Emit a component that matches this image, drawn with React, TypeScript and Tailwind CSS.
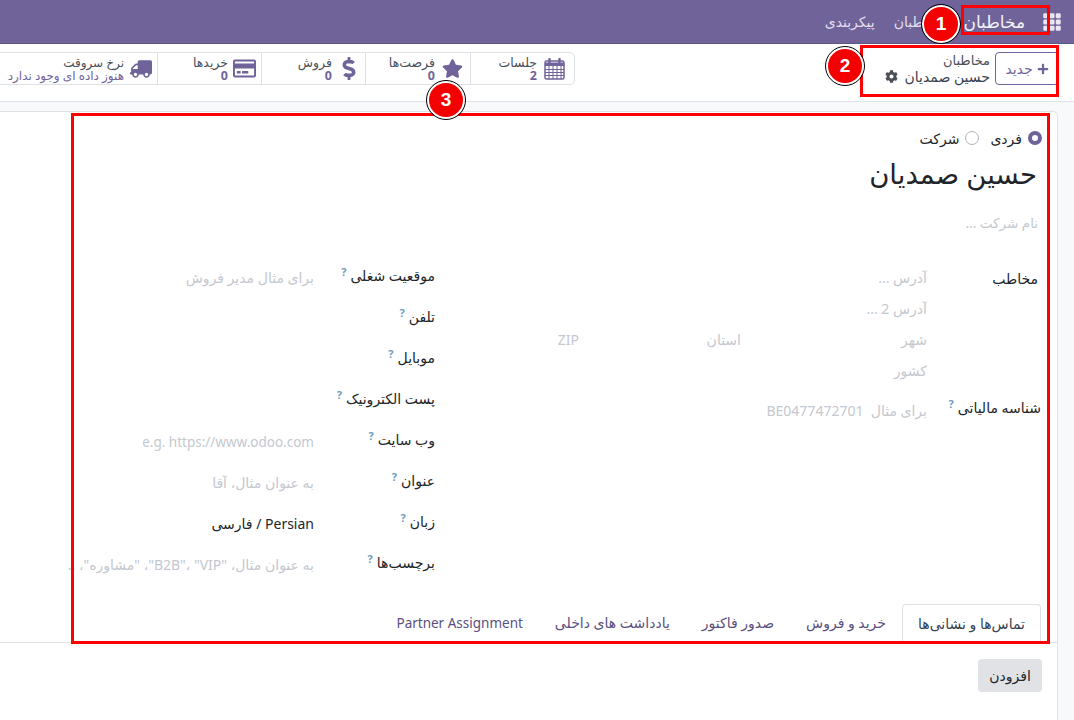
import React from 'react';
import { FaStar, FaDollarSign, FaRegCreditCard, FaTruck, FaPlus, FaCog } from 'react-icons/fa';
import { BsGrid3X3GapFill } from 'react-icons/bs';

const font = 'font-["Noto_Sans","DejaVu_Sans",sans-serif]';

const CalendarIcon = () => (
  <svg viewBox="0 0 21 22" className="w-[21px] h-[22px]" fill="none" stroke="currentColor">
    <rect x="1" y="3" width="19" height="18" rx="1.5" strokeWidth="1.5" />
    <path d="M1 4.5h19v3.5H1z" fill="currentColor" stroke="none" />
    <path d="M1 11.5h19M1 14.5h19M1 17.5h19M5 8v13M9 8v13M13 8v13M17 8v13" strokeWidth="1" />
    <path d="M5.5 1v4M15.5 1v4" strokeWidth="2.4" strokeLinecap="round" />
  </svg>
);

const stats = [
  { icon: <CalendarIcon />, label: 'جلسات', value: '2', w: 'w-[104px]', pr: 'pr-[9px] gap-[7px]' },
  { icon: <FaStar className="w-[21px] h-[21px]" />, label: 'فرصت‌ها', value: '0', w: 'w-[105px]', pr: 'pr-[7px] gap-[7px]' },
  { icon: <FaDollarSign className="w-[14px] h-[23px]" />, label: 'فروش', value: '0', w: 'w-[104px]', pr: 'pr-[9px] gap-[10px]' },
  { icon: <FaRegCreditCard className="w-[23px] h-[23px]" />, label: 'خریدها', value: '0', w: 'w-[104px]', pr: 'pr-[5px] gap-[5px]' },
];

const leftFields = [
  { label: 'موقعیت شغلی', placeholder: 'برای مثال مدیر فروش' },
  { label: 'تلفن', placeholder: '' },
  { label: 'موبایل', placeholder: '' },
  { label: 'پست الکترونیک', placeholder: '' },
  { label: 'وب سایت', placeholder: 'e.g. https://www.odoo.com', small: true },
  { label: 'عنوان', placeholder: 'به عنوان مثال، آقا' },
  { label: 'زبان', value: 'Persian / فارسی' },
  { label: 'برچسب‌ها', placeholder: 'به عنوان مثال، "B2B"، "VIP"، "مشاوره"، ...' },
];

const tabs = ['خرید و فروش', 'صدور فاکتور', 'یادداشت های داخلی', 'Partner Assignment'];

const Hint = () => <sup className="text-[11px] font-bold text-[#6f9dc0] mr-1 -top-[5px]">?</sup>;

// numbered red markers drawn on top of the screenshot
const Marker = ({ n, className }: { n: number; className: string }) => (
  <div className={`absolute w-[38px] h-[38px] rounded-full bg-[#f50000] border-2 border-white outline outline-1 outline-black flex items-center justify-center text-white text-[19px] font-bold font-["Liberation_Sans",sans-serif] ${className}`}>
    {n}
  </div>
);

export default function App() {
  return (
    <div dir="rtl" className={`relative w-[1074px] h-[720px] overflow-hidden bg-[#f8f9fa] text-[14px] text-[#212529] ${font}`}>
      {/* navbar */}
      <div className="h-[43px] bg-[#6f6399] flex items-center text-white pr-[12px] border-b border-[#5f5585] box-content">
        <BsGrid3X3GapFill className="w-[20px] h-[20px] text-[#e9e6f2]" />
        <span className="text-[17px] mr-[17px] text-[#f4f3f8]">مخاطبان</span>
        <span className="text-[14px] mr-[19px] text-[#e2deee]">مخاطبان</span>
        <span className="text-[14px] mr-[19px] text-[#e2deee]">پیکربندی</span>
      </div>

      {/* control panel */}
      <div className="h-[58px] bg-white border-b border-[#dee2e6] flex items-start pt-[8px] pr-[15px]">
        <button className="w-[64px] h-[33px] shrink-0 border border-[#6f6399] rounded-[4px] flex items-center justify-center gap-1 text-[#6f6399] text-[14px] bg-white">
          <FaPlus className="w-[12px] h-[12px]" />
          جدید
        </button>
        <div className="mr-[5px] w-[110px] leading-[15px] pt-[1px] shrink-0">
          <div className="text-[#4a4f57] text-[13px]">مخاطبان</div>
          <div className="flex items-center gap-[7px] text-[#374151] mt-[1px] text-[14px]">
            حسین صمدیان
            <FaCog className="w-[13px] h-[13px] text-[#4a4f57]" />
          </div>
        </div>
        <div className="mr-[305px] flex h-[33px] border border-[#dee2e6] rounded-r-[5px] bg-white shrink-0">
          {stats.map((s) => (
            <div key={s.label} className={`${s.w} ${s.pr} h-full border-l border-[#dee2e6] flex items-center shrink-0`}>
              <span className="text-[#6f6399] flex justify-center shrink-0">{s.icon}</span>
              <div className="leading-[13px] text-[12.5px] text-[#4a4f57]">
                <div className="whitespace-nowrap">{s.label}</div>
                <div className="font-bold text-[#6f6399]">{s.value}</div>
              </div>
            </div>
          ))}
          <div className="w-[170px] h-full flex items-center pr-[5px] gap-[6px] shrink-0">
            <FaTruck className="w-[22px] h-[22px] text-[#6f6399] -scale-x-100 shrink-0" />
            <div className="leading-[13px] text-[12px] whitespace-nowrap">
              <div className="text-[#4a4f57]">نرخ سروقت</div>
              <div className="text-[#6f6399]">هنوز داده ای وجود ندارد</div>
            </div>
          </div>
        </div>
      </div>

      {/* form sheet */}
      <div className="mt-[9px] mr-[16px] h-[620px] bg-white border border-[#dee2e6] rounded-tr-[5px] -ml-[20px]">
        <div className="pr-[16px] pt-[16px]">
          <div className="flex items-center text-[14px] h-[20px] -mr-px">
            <span className="w-[14px] h-[14px] rounded-full border-[4px] border-[#6f6399] bg-white" />
            <span className="mr-[6px]">فردی</span>
            <span className="mr-[11px] w-[14px] h-[14px] rounded-full border border-[#adb5bd]" />
            <span className="mr-[6px]">شرکت</span>
          </div>
          <div className="text-[27.5px] leading-[36px] mt-[8px] pr-[4px]">حسین صمدیان</div>
          <div className="text-[13.5px] text-[#c4c8cf] mt-[19px] pr-[3px] leading-[24px]">نام شرکت ...</div>

          <div className="flex mt-[31px]">
            {/* address group */}
            <div className="w-[606px] shrink-0 -mt-[4px]">
              <div className="flex">
                <div className="w-[114px] shrink-0 pt-[7px] pr-[3px] leading-[20px]">مخاطب</div>
                <div className="text-[14px] text-[#c4c8cf] leading-[31px]">
                  <div>آدرس ...</div>
                  <div>آدرس 2 ...</div>
                  <div className="flex">
                    <span className="w-[186px]">شهر</span>
                    <span className="w-[162px]">استان</span>
                    <span>ZIP</span>
                  </div>
                  <div>کشور</div>
                </div>
              </div>
              <div className="flex mt-[9px]">
                <div className="w-[114px] shrink-0 leading-[20px] pt-[3px]">شناسه مالیاتی<Hint /></div>
                <div className="text-[14px] text-[#c4c8cf] leading-[31px]">برای مثال&nbsp;&nbsp;BE0477472701</div>
              </div>
            </div>
            {/* contact group */}
            <div className="-mt-[2px]">
              {leftFields.map((f) => (
                <div key={f.label} className="flex h-[41px] items-start">
                  <div className="w-[121px] shrink-0 whitespace-nowrap leading-[22px] pt-[1px]">{f.label}<Hint /></div>
                  <div className={`whitespace-nowrap leading-[22px] pt-[3px] w-[247px] overflow-hidden ${f.small ? 'text-[13.5px]' : 'text-[14px]'} ${f.value ? 'text-[#212529]' : 'text-[#c4c8cf]'}`}>
                    {f.value ?? f.placeholder}
                  </div>
                </div>
              ))}
            </div>
          </div>
        </div>

        {/* tabs */}
        <div className="mt-[12px] h-[39px] border-b border-[#dee2e6] flex pr-[16px]">
          <div className="w-[139px] h-[39px] bg-white border border-b-white border-[#dee2e6] rounded-t-[4px] flex items-center justify-center text-[14px] text-[#374151]">
            تماس‌ها و نشانی‌ها
          </div>
          {tabs.map((t) => (
            <div key={t} className={`px-[16px] h-[38px] flex items-center whitespace-nowrap text-[#5a4f7f] ${t === 'Partner Assignment' ? 'text-[13.5px]' : 'text-[14px] pb-[1px]'}`}>{t}</div>
          ))}
        </div>
        <div className="pr-[15px] pt-[16px]">
          <button className="w-[64px] h-[33px] bg-[#e0e2e6] rounded-[4px] text-[14px] text-[#212529]">افزودن</button>
        </div>
      </div>

      {/* red annotations */}
      <div className="absolute left-[961px] top-[5px] w-[89px] h-[30px] border-[3px] border-[#ff0000]" />
      <div className="absolute left-[860px] top-[45px] w-[199px] h-[52px] border-[3px] border-[#ff0000]" />
      <div className="absolute left-[71px] top-[113px] w-[979px] h-[531px] border-[3px] border-[#ff0000]" />
      <Marker n={1} className="left-[922px] top-[5px]" />
      <Marker n={2} className="left-[826px] top-[47px]" />
      <Marker n={3} className="left-[427px] top-[81px]" />
    </div>
  );
}
